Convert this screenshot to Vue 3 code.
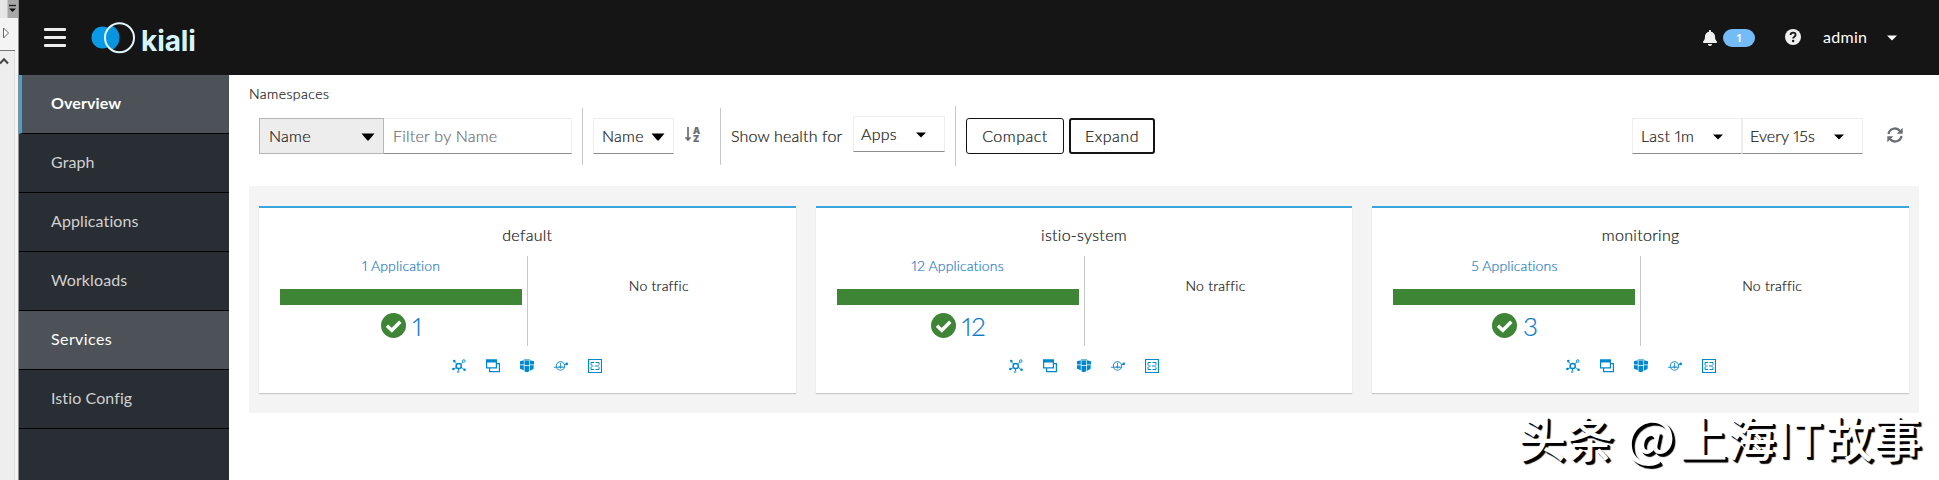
<script setup>
import { ref } from 'vue'

const active = ref('Overview')
const hovered = ref('Services')
const filterText = ref('')

const navItems = ['Overview', 'Graph', 'Applications', 'Workloads', 'Services', 'Istio Config']

const namespaces = [
    {name:"default", label:"1 Application", healthy:1},
    {name:"istio-system", label:"12 Applications", healthy:12},
    {name:"monitoring", label:"5 Applications", healthy:3},
]

const selectItem = (item) => {
    active.value = item
}
</script>
<template>
    <div class="wrapper">
        <!-- edge of the neighbour window -->
        <div class="edge">
            <div class="edge_top">
                <svg width="9" height="10" viewBox="0 0 9 10"><path d="M1 1.5h7" stroke="#222" stroke-width="1.4"/><path d="M1 4.500h7L4.500 8z" fill="#111"/></svg>
            </div>
            <div class="edge_mid">
                <svg width="8" height="12" viewBox="0 0 8 12"><path d="M1.500 1v10L6.500 6z" fill="#fff" stroke="#666" stroke-width="1"/></svg>
            </div>
            <div class="edge_body">
                <svg width="9" height="8" viewBox="0 0 9 8"><path d="M0 6.500L4 2.300L8 6.500" fill="none" stroke="#444" stroke-width="2"/></svg>
            </div>
        </div>
        <div class="app">
            <header class="header">
                <div class="burger"><i></i><i></i><i></i></div>
                <svg class="logo" width="46" height="32" viewBox="0 0 46 32">
                    <circle cx="11.500" cy="15.500" r="11" fill="#0a9be6"/>
                    <path d="M20.500 3.200A14.500 14.500 0 0 0 20.500 28.200Q28.500 24 28.500 15.700Q28.500 7.500 20.500 3.200z" fill="#0795df"/>
                    <circle cx="28.500" cy="15.700" r="14.500" fill="none" stroke="#e2f7fd" stroke-width="2"/>
                </svg>
                <span class="brand">kiali</span>
                <div class="tools">
                    <svg class="bell" width="14" height="16" viewBox="0 0 448 512"><path fill="#f0f0f0" d="M224 512c35.300 0 64-28.700 64-64H160c0 35.300 28.700 64 64 64zm215-150c-19-21-55-52-55-154 0-78-54-140-128-155V32c0-18-14-32-32-32s-32 14-32 32v21C118 68 64 130 64 208c0 102-36 133-55 154-6 6-9 14-9 22 0 16 13 32 32 32h384c19 0 32-16 32-32 0-8-3-16-9-22z"/></svg>
                    <span class="badge">1</span>
                    <svg class="help" width="16" height="16" viewBox="0 0 16 16"><circle cx="8" cy="8" r="8" fill="#f0f0f0"/><path d="M5.500 6C5.700 4.300 6.700 3.700 8 3.700c1.500 0 2.600.8 2.600 2.200 0 1.900-2.500 1.800-2.500 3.700" fill="none" stroke="#151515" stroke-width="1.800"/><circle cx="8.100" cy="12" r="1.250" fill="#151515"/></svg>
                    <span class="user">admin</span>
                    <svg width="10" height="6" viewBox="0 0 10 6"><path d="M0 .5h10L5 5.500z" fill="#fff"/></svg>
                </div>
            </header>
            <div class="body">
                <nav class="sidebar">
                    <div v-for="item of navItems" :key="item" class="nav_item" :class="{ active: item === active, hover: item === hovered }" @click="selectItem(item)">{{ item }}</div>
                </nav>
                <main class="main">
                    <div class="title">Namespaces</div>
                    <div class="toolbar">
                        <div class="select filter_type"><span>Name</span><svg width="14" height="8" viewBox="0 0 14 8"><path d="M.5 .5h13L8 7Q7 8 6 7z"/></svg></div>
                        <input class="filter_input" v-model="filterText" placeholder="Filter by Name">
                        <i class="divider"></i>
                        <div class="select sort_type"><span>Name</span><svg width="14" height="8" viewBox="0 0 14 8"><path d="M.5 .5h13L8 7Q7 8 6 7z"/></svg></div>
                        <div class="sort">
                            <svg width="6" height="15" viewBox="0 0 6 15"><path d="M3 0v13M.5 10.300L3 13L5.500 10.300" fill="none" stroke="#6a6e73" stroke-width="1.700"/></svg>
                            <div class="sort_az"><span>A</span><span>Z</span></div>
                        </div>
                        <i class="divider second"></i>
                        <span class="health_label">Show health for</span>
                        <div class="select apps"><span>Apps</span><svg width="10" height="6" viewBox="0 0 10 6"><path d="M0 .5h10L5 5.500z"/></svg></div>
                        <i class="divider third"></i>
                        <button class="btn compact">Compact</button>
                        <button class="btn expand">Expand</button>
                        <div class="select last"><span>Last 1m</span><svg width="10" height="6" viewBox="0 0 10 6"><path d="M0 .5h10L5 5.500z"/></svg></div>
                        <div class="select every"><span>Every 15s</span><svg width="10" height="6" viewBox="0 0 10 6"><path d="M0 .5h10L5 5.500z"/></svg></div>
                        <svg class="refresh" width="16" height="16" viewBox="0 0 16 16"><path d="M1.500 7A6.500 6.500 0 0 1 13 4M14.500 9A6.500 6.500 0 0 1 3 12" fill="none" stroke="#6a6e73" stroke-width="2.300"/><path d="M15.700 .8V6.800H9.700zM.3 15.200V9.200H6.300z" fill="#6a6e73"/></svg>
                    </div>
                    <div class="cards">
                        <div v-for="ns of namespaces" :key="ns.name" class="card">
                            <h4>{{ ns.name }}</h4>
                            <div class="card_body">
                                <div class="health">
                                    <a>{{ ns.label }}</a>
                                    <div class="bar"></div>
                                    <div class="status">
                                        <svg width="25" height="25" viewBox="0 0 25 25"><circle cx="12.500" cy="12.500" r="12.500" fill="#3e8635"/><path d="M6 12.800L10.800 17.300L19.300 8.800" fill="none" stroke="#fff" stroke-width="3.400"/></svg>
                                        <span>{{ ns.healthy }}</span>
                                    </div>
                                </div>
                                <div class="traffic">No traffic</div>
                            </div>
                            <div class="links">
                                <!-- graph -->
                                <svg width="14" height="14" viewBox="0 0 14 14"><g fill="none" stroke="#0088ce"><circle cx="6.700" cy="7" r="2.600" stroke-width="1.500"/><path d="M2 2.500L4.700 5M8.700 5L11 2.800M9.200 8.200L12 10.500M4.500 8.700L1.500 9.800M6.500 9.700V12" stroke-width=".9"/><circle cx="11.800" cy="2" r="1.300" stroke-width=".9"/><circle cx="6.200" cy="12.800" r=".9" stroke-width=".7"/></g><g fill="#0088ce"><circle cx="2.300" cy="2" r="1.300"/><circle cx="1.400" cy="10" r="1.300"/><circle cx="12.600" cy="10.800" r="1.300"/></g></svg>
                                <!-- applications -->
                                <svg width="14" height="14" viewBox="0 0 14 14"><path d="M.6 1.100h9.800v7.800H.6zM11 4.600h2.400v8H3.600V9.500" fill="none" stroke="#0088ce" stroke-width="1.200"/><path d="M0 .5h11v3H0z" fill="#0088ce"/></svg>
                                <!-- workloads -->
                                <svg width="14" height="14" viewBox="0 0 14 14"><g fill="#0088ce"><path d="M0 2.200L3.800 1.300V5.500H0zM4.500 1.500H9.300V6H4.500zM10 1.300L14 2.200V5.500H10zM0 6.300H3.800V11.200L0 9.800zM4.500 6.800H9.300V12.300L7 13.300L4.500 12.500zM10 6.300H13.800L13.500 10L10 11.800z"/></g><path d="M4 .8h6" stroke="#0088ce" stroke-width=".8"/></svg>
                                <!-- services -->
                                <svg width="14" height="14" viewBox="0 0 14 14"><g fill="none" stroke="#258fc7"><circle cx="6.500" cy="7" r="4.200" stroke-width="1.100"/><path d="M0 8.300h3M9.800 6L12.300 5M3 8.300h7M6.500 4v5.500M4.800 7L6.500 9L8.500 7" stroke-width=".9"/></g><circle cx="12.700" cy="4.900" r="1.300" fill="#0088ce"/></svg>
                                <!-- istio config -->
                                <svg width="14" height="14" viewBox="0 0 14 14"><path d="M.5.5h13v13H.5z" fill="none" stroke="#0088ce" stroke-width="1.200"/><path d="M3 6V3.500h3M7.500 3.500H11v2.300M3 8v2.500h3M7.500 10.500H11V8.200M3 7h2.500M7 7h4" fill="none" stroke="#0088ce" stroke-width="1"/></svg>
                            </div>
                        </div>
                    </div>
                </main>
            </div>
        </div>
        <div class="watermark"><span>头条</span> <span class="wm_at">@</span><span>上海</span><span class="wm_it">IT</span><span>故事</span></div>
    </div>
</template>
<style>
body {
    margin: 0;
    overflow: hidden;
}
</style>
<style scoped>
* {
    box-sizing: border-box;
}

svg {
    display: block;
    flex: none;
}

.wrapper {
    display: flex;
    position: relative;
    width: 1939px;
    height: 480px;
    overflow: hidden;
    background-color: #fff;
    color: #151515;
    font-family: Lato, "Open Sans", sans-serif;
    font-size: 16px;
    font-variant-numeric: proportional-nums;
}

.edge {
    display: flex;
    flex-direction: column;
    width: 19px;
    background-color: #f4f4f4;
    border-right: 1px solid #8c8f92;
}

.edge_top {
    height: 18px;
    padding: 4px 0 0 8px;
    background: linear-gradient(90deg, #e6e6e6 0 7px, #a8a8a8 8px);
}

.edge_mid {
    width: 15px;
    height: 33px;
    padding: 9px 0 0 2px;
    border-bottom: 1px solid #777;
}

.edge_body {
    flex: 1;
    width: 15px;
    padding-top: 6px;
    background-color: #eee;
    border-right: 1px solid #ddd;
}

.app {
    display: flex;
    flex-direction: column;
    width: 1920px;
}

.header {
    display: flex;
    height: 75px;
    padding-left: 25px;
    background-color: #151515;
}

.burger {
    display: flex;
    flex-direction: column;
    justify-content: space-between;
    width: 22px;
    height: 19px;
    margin-top: 28px;
}

.burger i {
    height: 3px;
    border-radius: 1px;
    background-color: #ededed;
}

.logo {
    margin: 22px 0 0 25px;
}

.brand {
    margin: 22px 0 0 4px;
    color: #d6f4fc;
    font-family: Inter, sans-serif;
    font-size: 28px;
    font-weight: 700;
    line-height: 38px;
    letter-spacing: -.1px;
}

.tools {
    display: flex;
    align-items: center;
    height: 75px;
    margin-left: auto;
    margin-right: 42px;
    color: #fff;
}

.bell {
    margin-top: 1px;
}

.badge {
    width: 32px;
    height: 18px;
    margin: 1px 30px 0 6px;
    border-radius: 9px;
    background-color: #73bcf7;
    font-size: 12px;
    font-weight: 700;
    line-height: 18px;
    text-align: center;
}

.help {
    margin: 0 22px 2px 0;
}

.user {
    width: 44px;
    margin-right: 20px;
    padding-bottom: 3px;
    letter-spacing: .3px;
}

.body {
    display: flex;
    flex: 1;
}

.sidebar {
    width: 210px;
    background-color: #292e34;
}

.nav_item {
    height: 59px;
    padding-left: 32px;
    border-bottom: 1px solid #030303;
    color: #d1d1d1;
    line-height: 55px;
    letter-spacing: .1px;
}

.nav_item.active {
    padding-left: 29px;
    border-left: 3px solid #39a5dc;
    background-color: #4d5258;
    color: #fff;
    font-weight: 700;
}

.nav_item.hover {
    background-color: #4d5258;
    color: #fff;
    letter-spacing: .4px;
}

.main {
    width: 1710px;
    padding: 9px 20px 0;
    font-weight: 300;
    letter-spacing: .25px;
    -webkit-text-stroke: .2px currentColor;
}

.title {
    height: 20px;
    font-size: 14px;
    line-height: 20px;
    letter-spacing: .45px;
}

.toolbar {
    display: flex;
    height: 82px;
    padding: 14px 16px 0 10px;
}

.select {
    display: flex;
    align-items: center;
    height: 36px;
    border: 1px solid #ededed;
    border-bottom-color: #8a8d90;
}

.select span {
    padding-bottom: 2px;
}

.select svg {
    margin-top: 1px;
}

.filter_type {
    width: 125px;
    padding: 0 8px 0 9px;
    justify-content: space-between;
    border-color: #b5b5b5;
    background-color: #ededed;
}

.filter_input {
    width: 188px;
    height: 36px;
    padding: 0 0 2px 9px;
    border: 1px solid #ededed;
    border-bottom-color: #8a8d90;
    border-left: none;
    font: inherit;
    letter-spacing: .25px;
    outline: none;
}

.filter_input::placeholder {
    color: #6a6e73;
    opacity: 1;
}

.divider {
    width: 1px;
    height: 57px;
    margin: -10px 10px 0;
    background-color: #c7c7c7;
}

.sort_type {
    width: 81px;
    padding: 0 8px;
    justify-content: space-between;
}

.sort {
    display: flex;
    gap: 2px;
    width: 35px;
    padding: 9px 0 0 11px;
    color: #6a6e73;
}

.sort_az {
    display: flex;
    flex-direction: column;
    font-family: Inter, sans-serif;
    font-size: 9px;
    font-weight: 900;
    line-height: 8px;
}

.second {
    margin-left: 11px;
}

.health_label {
    width: 122px;
    line-height: 35px;
    letter-spacing: .15px;
}

.apps {
    width: 92px;
    margin-top: -2px;
    padding: 0 18px 0 7px;
    justify-content: space-between;
}

.third {
    height: 60px;
    margin-top: -12px;
}

.btn {
    height: 36px;
    padding: 0 0 2px;
    border: 1px solid #151515;
    border-radius: 3px;
    background-color: #fff;
    color: #151515;
    font: inherit;
    letter-spacing: .5px;
}

.compact {
    width: 98px;
    margin-right: 5px;
}

.expand {
    width: 86px;
    border-width: 2px;
}

.last {
    width: 110px;
    margin-left: auto;
    padding: 0 18px 0 8px;
    justify-content: space-between;
}

.every {
    width: 121px;
    padding: 0 18px 0 7px;
    justify-content: space-between;
    letter-spacing: .1px;
}

.refresh {
    margin: 9px 0 0 24px;
}

.cards {
    display: flex;
    gap: 20px;
    height: 227px;
    padding: 20px 10px;
    background-color: #f4f4f4;
}

.card {
    flex: 1;
    height: 187px;
    padding: 0 21px;
    border-top: 2px solid #39a5dc;
    background-color: #fff;
    box-shadow: 0 1px 1px rgba(3, 3, 3, .18);
}

.card h4 {
    height: 48px;
    margin: 0;
    padding-top: 15px;
    font-size: 16px;
    font-weight: 300;
    line-height: 24px;
    letter-spacing: .3px;
    text-align: center;
}

.card_body {
    display: flex;
    height: 90px;
}

.health {
    width: 248px;
    padding-right: 5px;
    border-right: 1px solid #c7c7c7;
    text-align: center;
}

.health a {
    display: block;
    height: 33px;
    color: #1f7cc2;
    font-size: 14px;
    line-height: 20px;
    letter-spacing: .15px;
}

.bar {
    height: 16px;
    background-color: #3e8635;
}

.status {
    display: flex;
    justify-content: center;
    gap: 6px;
    padding: 8px 0 0 1px;
    color: #0f7ac4;
    font-size: 26px;
    line-height: 27px;
    letter-spacing: -.3px;
}

.traffic {
    flex: 1;
    padding-left: 15px;
    font-size: 14px;
    line-height: 60px;
    text-align: center;
}

.links {
    display: flex;
    justify-content: center;
    gap: 20px;
    padding-top: 13px;
}

/* sits over the page corner */
.watermark {
    position: absolute;
    left: 1518px;
    top: 402px;
    color: #fff;
    font-family: "Noto Sans CJK SC", sans-serif;
    font-size: 48px;
    font-weight: 500;
    line-height: 68px;
    white-space: nowrap;
    text-shadow: 2px 2px 0 #000, 3px 3px 1px #000;
}

.wm_at {
    margin-right: 4px;
    font-size: 52px;
    line-height: 48px;
}

.wm_it {
    margin: 0 1px;
    letter-spacing: 2px;
}
</style>
